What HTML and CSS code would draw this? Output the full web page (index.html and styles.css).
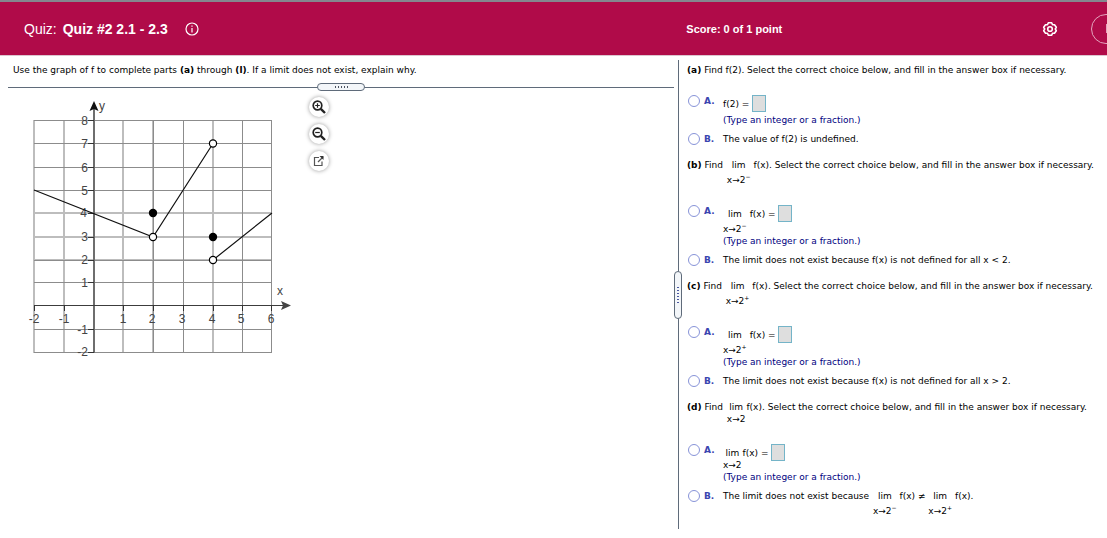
FILE: index.html
```
<!DOCTYPE html>
<html lang="en">
<head>
<meta charset="utf-8">
<title>Quiz #2 2.1 - 2.3</title>
<link rel="stylesheet" href="styles.css">
</head>
<body>
<header class="topbar">
  <div class="quiz-title">
    <span class="quiz-label">Quiz:</span>
    <strong class="quiz-name">Quiz #2 2.1 - 2.3</strong>
    <button class="icon-button info" type="button" aria-label="Quiz information">
      <svg width="14" height="14" viewBox="0 0 14 14" fill="none" stroke="#fff" stroke-width="1.2"><circle cx="7" cy="7" r="6"/><path d="M7 6v4.4M7 3.400v1.400"/></svg>
    </button>
  </div>
  <div class="status">
    <strong class="score">Score: 0 of 1 point</strong>
    <button class="icon-button settings" type="button" aria-label="Settings">
      <svg width="16" height="16" viewBox="0 0 16 16" fill="none" stroke="#fff" stroke-width="1.6" stroke-linejoin="round"><path d="M6.3 1.8h3.4l.8 1.9 2 .1 1.8 2.5-1 1.7 1 1.7-1.8 2.5-2 .1-.8 1.9H6.300l-.8-1.900-2-.1-1.800-2.500 1-1.700-1-1.700 1.800-2.500 2-.1z"/><circle cx="8" cy="8" r="2.300"/></svg>
    </button>
    <button class="pill" type="button" aria-label="Item menu"></button>
  </div>
</header>
<main class="workspace">
  <section class="stem">
    <p class="stem-text">Use the graph of f to complete parts <b>(a)</b> through <b>(l)</b>. If a limit does not exist, explain why.</p>
    <div class="split-row"><span class="grip"><i></i><i></i><i></i><i></i><i></i></span></div>
    <div class="figure">
      <svg class="graph" width="280" height="264" viewBox="20 96 280 264" role="img" aria-label="Graph of f">
        <g fill="none" stroke="#bdbdbd" stroke-width="2"><path d="M34 120v233M64 120v233M153 120v233M213 120v233M123 120v233M34 213h238M34 260h238M34 237h238"/></g>
        <g fill="none" stroke="#8c8c8c" stroke-width="1"><path d="M183.500 120v233M242.500 120v233M271.500 120v233M153.500 120v233M34 120.500h238M34 143.500h238M34 167.500h238M34 190.500h238M34 260.500h238M34 282.500h238M34 329.500h238M34 352.500h238"/></g>
        <path d="M94 103v250" stroke="#6e6e6e" stroke-width="2"/>
        <path d="M34 305.500h250" stroke="#3c3c3c"/>
        <path d="M88 120.500h6M88 143.500h6M88 167.500h6M88 190.500h6M88 213.500h6M88 237.500h6M88 260.500h6M88 282.500h6M88 329.500h6M88 352.500h6M34.500 305v6M64.500 305v6M123.500 305v6M153.500 305v6M183.500 305v6M213.500 305v6M242.500 305v6M271.500 305v6" stroke="#333"/>
        <path d="M94 101l4.500 10-4.500-2-4.500 2z" fill="#111"/>
        <path d="M291 305.500l-10-4.500 2 4.500-2 4.500z" fill="#444"/>
        <g class="tick-y"><text x="88" y="125">8</text><text x="88" y="148">7</text><text x="88" y="172">6</text><text x="88" y="195">5</text><text x="87" y="217">4</text><text x="88" y="241">3</text><text x="88" y="264">2</text><text x="88" y="287">1</text><text x="88" y="334">-1</text><text x="88" y="356">-2</text></g>
        <g class="tick-x"><text x="34" y="323">-2</text><text x="64" y="323">-1</text><text x="123" y="323">1</text><text x="152" y="323">2</text><text x="182" y="323">3</text><text x="212" y="323">4</text><text x="241" y="323">5</text><text x="271" y="323">6</text><text x="102" y="110">y</text><text x="280" y="295">x</text></g>
        <path d="M34 190L153 237L213 143.500M213 260L272 213" fill="none" stroke="#111" stroke-width="1.200"/>
        <g fill="#fff" stroke="#000" stroke-width="1.200"><circle cx="153" cy="237" r="3.600"/><circle cx="213" cy="143.500" r="3.600"/><circle cx="213" cy="260" r="3.600"/></g>
        <circle cx="153" cy="213" r="4.200" fill="#000"/><circle cx="213" cy="237" r="4.200" fill="#000"/>
      </svg>
      <div class="tools">
        <button class="tool" type="button" aria-label="Zoom in"><svg width="14" height="14" viewBox="0 0 14 14" fill="none" stroke="#222"><circle cx="5.500" cy="5.500" r="4.300" stroke-width="1.700"/><path d="M3.200 5.500h4.600M5.500 3.200v4.600" stroke-width="1.200"/><path d="M8.800 8.800l4.200 4.200" stroke-width="2.400"/></svg></button>
        <button class="tool" type="button" aria-label="Zoom out"><svg width="14" height="14" viewBox="0 0 14 14" fill="none" stroke="#222"><circle cx="5.500" cy="5.500" r="4.300" stroke-width="1.700"/><path d="M3.200 5.500h4.600" stroke-width="1.200"/><path d="M8.800 8.800l4.200 4.200" stroke-width="2.400"/></svg></button>
        <button class="tool" type="button" aria-label="Open in new window"><svg width="12" height="12" viewBox="0 0 12 12" fill="none" stroke="#555"><path d="M6 2.500H1.500v8H9V6.500" stroke-width="1.200"/><path d="M5 7l5-5" stroke-width="1.300"/><path d="M6.500 1h4v4z" fill="#333" stroke="none"/></svg></button>
      </div>
    </div>
  </section>
  <div class="divider"><span class="grip grip-tall"><i></i><i></i><i></i><i></i><i></i><i></i></span></div>
  <section class="questions">
    <form>
      <fieldset class="part">
        <legend class="line"><b>(a)</b> Find f(2). Select the correct choice below, and fill in the answer box if necessary.</legend>
        <div class="choice first">
          <input type="radio" name="a" id="a1"><label class="letter" for="a1">A.</label>
          <div class="body"><div class="line"><label class="expr" for="a-box">f(2) = </label><input class="answer" id="a-box" type="text"></div><div class="hint">(Type an integer or a fraction.)</div></div>
        </div>
        <div class="choice">
          <input type="radio" name="a" id="a2"><label class="letter" for="a2">B.</label>
          <label class="body" for="a2">The value of f(2) is undefined.</label>
        </div>
      </fieldset>
      <fieldset class="part">
        <legend class="line"><b>(b)</b> Find <span class="lim spaced"><span>lim</span><span>x→2<sup>−</sup></span></span>f(x). Select the correct choice below, and fill in the answer box if necessary.</legend>
        <div class="choice first">
          <input type="radio" name="b" id="b1"><label class="letter" for="b1">A.</label>
          <div class="body"><div class="line"><label class="expr" for="b-box"><span class="lim"><span>lim</span><span>x→2<sup>−</sup></span></span>f(x) = </label><input class="answer" id="b-box" type="text"></div><div class="hint">(Type an integer or a fraction.)</div></div>
        </div>
        <div class="choice">
          <input type="radio" name="b" id="b2"><label class="letter" for="b2">B.</label>
          <label class="body" for="b2">The limit does not exist because f(x) is not defined for all x &lt; 2.</label>
        </div>
      </fieldset>
      <fieldset class="part">
        <legend class="line"><b>(c)</b> Find <span class="lim spaced"><span>lim</span><span>x→2<sup>+</sup></span></span>f(x). Select the correct choice below, and fill in the answer box if necessary.</legend>
        <div class="choice first">
          <input type="radio" name="c" id="c1"><label class="letter" for="c1">A.</label>
          <div class="body"><div class="line"><label class="expr" for="c-box"><span class="lim"><span>lim</span><span>x→2<sup>+</sup></span></span>f(x) = </label><input class="answer" id="c-box" type="text"></div><div class="hint">(Type an integer or a fraction.)</div></div>
        </div>
        <div class="choice">
          <input type="radio" name="c" id="c2"><label class="letter" for="c2">B.</label>
          <label class="body" for="c2">The limit does not exist because f(x) is not defined for all x &gt; 2.</label>
        </div>
      </fieldset>
      <fieldset class="part">
        <legend class="line"><b>(d)</b> Find <span class="lim tight spaced"><span>lim</span><span>x→2</span></span>f(x). Select the correct choice below, and fill in the answer box if necessary.</legend>
        <div class="choice first">
          <input type="radio" name="d" id="d1"><label class="letter" for="d1">A.</label>
          <div class="body"><div class="line"><label class="expr" for="d-box"><span class="lim tight"><span>lim</span><span>x→2</span></span>f(x) = </label><input class="answer" id="d-box" type="text"></div><div class="hint">(Type an integer or a fraction.)</div></div>
        </div>
        <div class="choice">
          <input type="radio" name="d" id="d2"><label class="letter" for="d2">B.</label>
          <label class="body line" for="d2">The limit does not exist because <span class="lim spaced"><span>lim</span><span>x→2<sup>−</sup></span></span>f(x) ≠ <span class="lim"><span>lim</span><span>x→2<sup>+</sup></span></span>f(x).</label>
        </div>
      </fieldset>
    </form>
  </section>
</main>
</body>
</html>
```
FILE: styles.css
```
* { box-sizing: border-box; }
body {
  margin: 0;
  background: #fff;
  color: #000;
  font: 9px/12px "DejaVu Sans", Verdana, sans-serif;
  overflow-x: hidden;
}
button { padding: 0; border: 0; background: none; font: inherit; color: inherit; }

.topbar {
  display: grid;
  grid-template-columns: 62fr 38fr;
  height: 56px;
  border-top: 2px solid #84878f;
  border-bottom: 1px solid #dcc5cf;
  background: #b00b49;
  color: #fff;
  font-family: "Liberation Sans", Arial, sans-serif;
  overflow: hidden;
}
.quiz-title, .status { display: flex; align-items: center; }
.quiz-title { padding-left: 24px; font-size: 14px; line-height: 16px; }
.quiz-label { margin-right: 6px; }
.icon-button { display: flex; }
.info { margin-left: 17px; }
.score { flex: 1; font-size: 11px; }
.settings { margin-right: 33px; }
.pill {
  display: flex;
  align-items: center;
  width: 48px;
  height: 30px;
  margin-right: -32px;
  padding-left: 14px;
  border: 1px solid #e3a5bd;
  border-radius: 15px;
}
.pill::before { content: ""; width: 2px; height: 9px; background: #e3a5bd; }

.workspace {
  display: grid;
  grid-template-columns: minmax(0, 674fr) 8px minmax(0, 425fr);
  padding-top: 4px;
}
.stem { padding-left: 8px; }
.stem-text { margin: 4px 0 7px 5px; }
.split-row {
  display: flex;
  justify-content: center;
  align-items: center;
  height: 8px;
  background: linear-gradient(#5f6b7a, #5f6b7a) center / 100% 1px no-repeat;
}
.grip {
  display: flex;
  justify-content: center;
  align-items: center;
  gap: 2px;
  width: 48px;
  height: 8px;
  border: 1px solid #5f6b7a;
  border-radius: 5px;
  background: #f3f6f9;
}
.grip i { width: 1px; height: 2px; background: #4a5260; }
.divider {
  display: flex;
  justify-content: center;
  align-items: center;
  height: 469px;
  background: linear-gradient(#5f6b7a, #5f6b7a) center / 1px 100% no-repeat;
}
.grip-tall { flex-direction: column; width: 8px; height: 48px; }
.grip-tall i { width: 2px; height: 1px; background: #4b58a0; }

.figure { display: flex; padding: 5px 0 0 12px; }
.graph { flex: none; font: 12px "Liberation Sans", Arial, sans-serif; }
.graph text { fill: #444; }
.tick-y { text-anchor: end; }
.tick-x { text-anchor: middle; }
.tools { display: flex; flex-direction: column; gap: 7px; padding: 1px 0 0 9px; }
.tool {
  display: flex;
  justify-content: center;
  align-items: center;
  width: 20px;
  height: 20px;
  border-radius: 50%;
  background: #fff;
  box-shadow: 0 0 4px #999;
}

.questions { padding: 4px 0 0 5px; }
.part { min-width: 0; margin: 0 0 14px; padding: 0; border: 0; }
.line { display: flex; align-items: flex-start; padding: 0; white-space: pre; }
.choice { display: flex; align-items: flex-start; margin-top: 7px; white-space: nowrap; }
.first { margin-top: 19px; }
.choice input[type="radio"] {
  appearance: none;
  width: 12px;
  height: 12px;
  margin: 0 4px 0 1px;
  border: 1px solid #8793d8;
  border-radius: 50%;
  background: #fff;
}
.letter { width: 19px; color: #3a45b0; font-weight: bold; }
.expr { display: flex; padding-top: 3px; white-space: pre; }
.answer {
  width: 14px;
  height: 17px;
  margin: 0 0 2px;
  padding: 0;
  border: 1px solid #74b4c8;
  background: #dedede;
  font: inherit;
}
.hint { color: #000080; }
.lim { display: flex; flex-direction: column; align-items: center; gap: 3px; margin-right: 3px; }
.lim.tight { gap: 0; margin-right: 1px; }
.spaced { margin-left: 1px; }
.lim sup { font-size: 6px; line-height: 0; vertical-align: 4px; }
```
